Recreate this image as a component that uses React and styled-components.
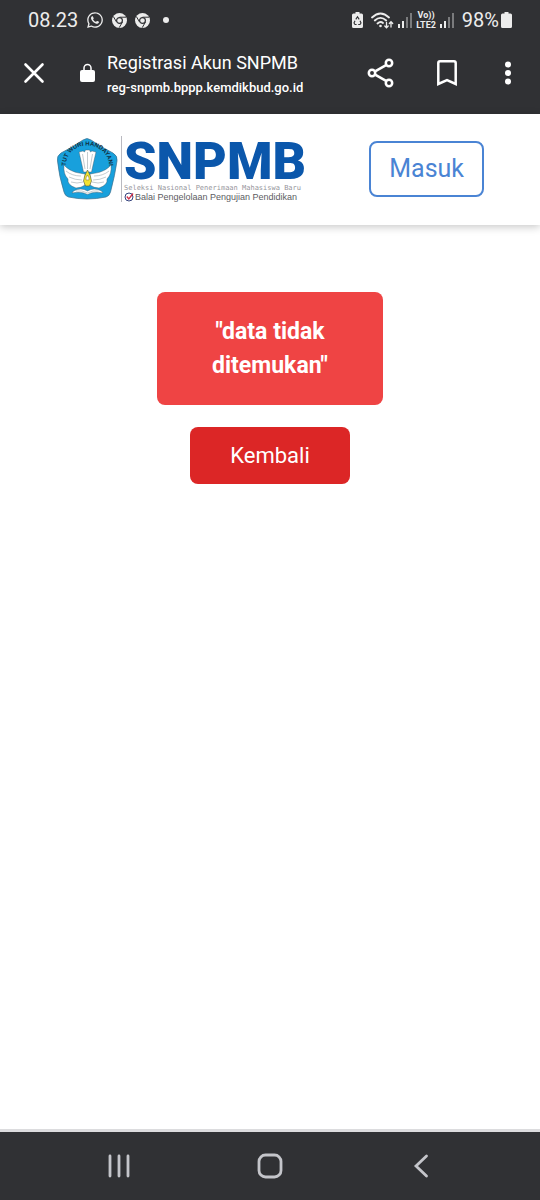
import React from 'react'
import styled, { createGlobalStyle } from 'styled-components'
import { FaWhatsapp } from 'react-icons/fa'

const GlobalStyle = createGlobalStyle`
  * {
    box-sizing: border-box;
  }

  body {
    margin: 0;
    background: #fff;
    font-family: Roboto, 'Noto Sans', sans-serif;
  }

  button {
    font-family: inherit;
    cursor: pointer;
  }
`

const Screen = styled.div`
  display: flex;
  flex-direction: column;
  min-height: 100vh;
`

const Chrome = styled.div`
  background: #303134;
  color: #fff;
`

const StatusBar = styled.div`
  display: flex;
  align-items: center;
  justify-content: space-between;
  height: 40px;
  padding: 0 28px;
  color: #ececec;
  font-size: 20px;
`

const StatusGroup = styled.div`
  display: flex;
  align-items: center;
  gap: ${props => props.$gap}px;

  svg {
    display: block;
    flex: none;
  }
`

const Dot = styled.span`
  width: 6px;
  height: 6px;
  margin-left: 5px;
  border-radius: 50%;
  background: #ececec;
`

const Volte = styled.span`
  display: flex;
  flex-direction: column;
  align-items: center;
  font-size: 9px;
  font-weight: 700;
  line-height: 10px;
`

const BatteryLevel = styled.span`
  display: flex;
  align-items: center;
  gap: 2px;
  margin-left: 4px;
`

const Toolbar = styled.div`
  display: flex;
  align-items: center;
  height: 74px;
  padding: 0 23px 8px 20px;
`

const IconButton = styled.button`
  display: flex;
  padding: 0;
  border: 0;
  background: none;
  color: inherit;
`

const Address = styled.div`
  display: flex;
  flex: 1;
  align-items: center;
  min-width: 0;
  margin-left: 30px;
  gap: 10px;
`

const AddressText = styled.div`
  padding-top: 4px;
`

const AddressTitle = styled.div`
  font-size: 18px;
  line-height: 26px;
`

const AddressHost = styled.div`
  font-size: 13px;
  font-weight: 500;
  line-height: 24px;
`

const Actions = styled.div`
  display: flex;
  align-items: center;
  gap: 38px;
`

const Header = styled.header`
  display: flex;
  align-items: center;
  justify-content: space-between;
  height: 111px;
  padding: 0 56px 2px;
  background: #fff;
  box-shadow: 0 2px 8px rgba(0, 0, 0, 0.22);
`

const Brand = styled.a`
  display: flex;
  align-items: center;
  gap: 3px;
  color: inherit;
  text-decoration: none;
`

const BrandText = styled.div`
  padding-left: 2px;
  border-left: 1px solid #b9b9c0;
  white-space: nowrap;
`

const BrandName = styled.div`
  padding-top: 4px;
  color: #0b57ab;
  font-size: 52px;
  font-weight: 900;
  line-height: 44px;
`

const BrandLine = styled.div`
  color: #96969c;
  font-family: 'DejaVu Sans Mono', monospace;
  font-size: 7px;
  line-height: 8px;
`

const BrandOffice = styled.div`
  display: flex;
  align-items: center;
  gap: 1px;
  color: #5c5c62;
  font-family: 'Liberation Sans', sans-serif;
  font-size: 9px;
  line-height: 10px;
`

const LoginButton = styled.button`
  height: 56px;
  padding: 0 18px;
  border: 2px solid #4a84d4;
  border-radius: 8px;
  background: #fff;
  color: #4a84d4;
  font-size: 25px;
`

const Main = styled.main`
  display: flex;
  flex: 1;
  flex-direction: column;
  align-items: center;
  gap: 22px;
  padding-top: 67px;
`

const Alert = styled.div`
  width: 42%;
  padding: 23px 45px 22px;
  border-radius: 8px;
  background: #ef4444;
  color: #fff;
  font-size: 23px;
  font-weight: 700;
  line-height: 34px;
  text-align: center;
`

const BackButton = styled.button`
  height: 57px;
  padding: 0 40px;
  border: 0;
  border-radius: 8px;
  background: #dc2626;
  color: #fff;
  font-size: 22px;
`

const NavBar = styled.nav`
  display: grid;
  grid-template-columns: repeat(3, 1fr);
  justify-items: center;
  align-items: center;
  height: 71px;
  padding: 0 8%;
  border-top: 3px solid #dcdcde;
  background: #303134;
  color: #c4c5ca;
`

const Signal = () => (
  <svg width="14" height="15" viewBox="0 0 14 15" fill="currentColor">
    <rect x="0" y="11" width="2" height="4" />
    <rect x="4" y="8" width="2" height="7" />
    <rect x="8" y="4" width="2" height="11" opacity="0.4" />
    <rect x="12" y="0" width="2" height="15" opacity="0.4" />
  </svg>
)

const ChromeIcon = () => (
  <svg width="15" height="15" viewBox="0 0 15 15">
    <circle cx="7.500" cy="7.500" r="7.500" fill="currentColor" />
    <path d="M7.500 4.200H14M4.600 9.100L1.400 3.600M10.400 9.100L7.200 14.700" stroke="#303134" strokeWidth="1" />
    <circle cx="7.500" cy="7.500" r="2.900" fill="currentColor" stroke="#303134" strokeWidth="1.200" />
  </svg>
)

const Battery = () => (
  <svg width="11" height="16" viewBox="0 0 11 16">
    <path d="M3.500 0h4v1.500H9.500Q11 1.500 11 3v11.500q0 1.500-1.500 1.500h-8Q0 16 0 14.500V3q0-1.500 1.500-1.500h2z" fill="currentColor" />
  </svg>
)

const RecycleBattery = () => (
  <svg width="15" height="16" viewBox="0 0 15 16">
    <path d="M3.500 0h4v1.500H9.500Q11 1.500 11 3v11.500q0 1.500-1.500 1.500h-8Q0 16 0 14.500V3q0-1.500 1.500-1.500h2z" fill="currentColor" />
    <path
      d="M3.800 7.400 5.500 4.800 7.200 7.400M8 8.800l1 2.200-1 1.500H6.200M4.600 12.500H3L2 11l1-2.200"
      fill="none"
      stroke="#303134"
      strokeWidth="1.100"
    />
  </svg>
)

const Wifi = () => (
  <svg width="23" height="17" viewBox="0 0 23 17" fill="none" stroke="currentColor" strokeLinecap="round">
    <path d="M1 5.500Q9.500-2.500 18 5.500M3.800 8.500Q9.500 3.200 15.200 8.500M6.500 11.500Q9.500 8.800 12 11" strokeWidth="1.800" />
    <circle cx="9.500" cy="14" r="1.300" fill="currentColor" stroke="none" />
    <path d="M15.500 10.500v5M13.800 14l1.700 1.800 1.700-1.800M20 15v-5M18.300 11.500 20 9.700 21.700 11.500" strokeWidth="1.300" />
  </svg>
)

const Crest = () => (
  <svg width="62" height="63" viewBox="7 7 62 63" role="img" aria-label="Tut Wuri Handayani">
    <defs>
      <path id="motto" d="M17 38C15 8 61 8 60 38" />
    </defs>
    <path
      d="M34 10Q38 7 42 10Q52 17 64 23Q69 26 68 31Q66 45 61.500 62Q60.500 66 57 67Q38 71 19.500 67Q16 66 15 62Q10 46 8.500 31Q7.500 26 12 23Q24 17 34 10Z"
      fill="#18a0dc"
      stroke="#3c6f8c"
      strokeWidth="0.700"
    />
    <text fill="#12303f" fontFamily="Liberation Sans, sans-serif" fontSize="6" fontWeight="700">
      <textPath href="#motto" startOffset="50%" textAnchor="middle">TUT WURI HANDAYANI</textPath>
    </text>
    <g fill="#fff" stroke="#41505a" strokeWidth="0.400">
      <path d="M36 44C31 43 22 43 15 35Q14 44 19 49Q18 55 27 58Q32 58 36 55Z" />
      <path d="M41 44C46 43 55 43 62 35Q63 44 58 49Q59 55 50 58Q45 58 41 55Z" />
      <path d="M30 22l4-1 1.500 1 1-2h4l1 2 1.500-1 4 1-3 13-1.500 7h-8L33 35Z" />
      <path d="M24.500 61Q32 57 38.500 61Q45 57 52.500 61L54 63Q45 61 38.500 64.500Q32 61 23 63Z" />
    </g>
    <path
      d="M33.500 24l2.500 15M38.500 22v17M43.500 24L41 39M17 41q6 5 15 5M20 47q6 3 13 3M22 52q6 2 12 0M60 41q-6 5-15 5M57 47q-6 3-13 3M55 52q-6 2-12 0M27 61q6-1 11.500 2 5.500-3 11-2"
      fill="none"
      stroke="#8b989f"
      strokeWidth="0.500"
    />
    <path d="M38.500 40Q35 46 34.500 51l2 5h4l2-5Q42 46 38.500 40Z" fill="#f3e330" stroke="#4d5540" strokeWidth="0.600" />
    <path d="M38.500 45q-2 3-1.500 5h3q.500-2-1.500-5" fill="#fff" stroke="#7b7130" strokeWidth="0.500" />
  </svg>
)

const OfficeMark = () => (
  <svg width="10" height="10" viewBox="0 0 10 10" fill="none">
    <circle cx="5" cy="5" r="4" stroke="#33427d" strokeWidth="1" />
    <path d="M2.800 4.500 4.800 7 9 1.500" stroke="#d02f49" strokeWidth="1.300" />
  </svg>
)

const CloseIcon = () => (
  <svg width="28" height="28" viewBox="0 0 28 28" stroke="currentColor" strokeWidth="2.600" strokeLinecap="round">
    <path d="M5.500 5.500l17 17M22.500 5.500l-17 17" />
  </svg>
)

const LockIcon = () => (
  <svg width="19" height="20" viewBox="0 0 19 20">
    <path d="M6 8V5a3.500 3.500 0 0 1 7 0V8" fill="none" stroke="currentColor" strokeWidth="1.500" />
    <rect x="2" y="7" width="15" height="12" rx="2" fill="currentColor" />
  </svg>
)

const ShareIcon = () => (
  <svg width="28" height="30" viewBox="0 0 28 30" fill="none" stroke="currentColor" strokeWidth="2.500">
    <path d="M8.500 13.200l11-6.400M8.500 16.800l11 6.400" />
    <circle cx="5" cy="15" r="3.200" />
    <circle cx="22" cy="5" r="3.200" />
    <circle cx="22" cy="25" r="3.200" />
  </svg>
)

const BookmarkIcon = () => (
  <svg width="28" height="30" viewBox="0 0 28 30" fill="none" stroke="currentColor" strokeWidth="2.500">
    <path d="M5.300 26V5q0-1.700 1.700-1.700h14q1.700 0 1.700 1.700v21L14 22.200Z" />
  </svg>
)

const MoreIcon = () => (
  <svg width="18" height="30" viewBox="0 0 18 30" fill="currentColor">
    <circle cx="9" cy="6.500" r="3" />
    <circle cx="9" cy="15" r="3" />
    <circle cx="9" cy="23.500" r="3" />
  </svg>
)

const RecentsIcon = () => (
  <svg width="28" height="28" viewBox="0 0 28 28" stroke="currentColor" strokeWidth="2.800" strokeLinecap="round">
    <path d="M5 4v20M14 4v20M23 4v20" />
  </svg>
)

const HomeIcon = () => (
  <svg width="28" height="28" viewBox="0 0 28 28" fill="none" stroke="currentColor" strokeWidth="2.800">
    <rect x="3" y="3" width="22" height="22" rx="6.500" />
  </svg>
)

const BackIcon = () => (
  <svg width="28" height="28" viewBox="0 0 28 28" fill="none" stroke="currentColor" strokeWidth="2.800" strokeLinecap="round">
    <path d="M19.500 4L9 14l10.500 10" />
  </svg>
)

const actions = [
  { label: 'Bagikan', icon: ShareIcon },
  { label: 'Simpan', icon: BookmarkIcon },
  { label: 'Menu', icon: MoreIcon }
]

const navItems = [
  { label: 'Terbaru', icon: RecentsIcon },
  { label: 'Beranda', icon: HomeIcon },
  { label: 'Mundur', icon: BackIcon }
]

const App = () => (
  <Screen>
    <GlobalStyle />

    <Chrome>
      <StatusBar>
        <StatusGroup $gap={8}>
          <span>08.23</span>
          <FaWhatsapp size={18} />
          <ChromeIcon />
          <ChromeIcon />
          <Dot />
        </StatusGroup>
        <StatusGroup $gap={4}>
          <RecycleBattery />
          <Wifi />
          <Signal />
          <Volte>
            <span>Vo))</span>
            <span>LTE2</span>
          </Volte>
          <Signal />
          <BatteryLevel>
            98%
            <Battery />
          </BatteryLevel>
        </StatusGroup>
      </StatusBar>

      <Toolbar>
        <IconButton type="button" aria-label="Tutup">
          <CloseIcon />
        </IconButton>
        <Address>
          <LockIcon />
          <AddressText>
            <AddressTitle>Registrasi Akun SNPMB</AddressTitle>
            <AddressHost>reg-snpmb.bppp.kemdikbud.go.id</AddressHost>
          </AddressText>
        </Address>
        <Actions>
          {actions.map(({ label, icon: Icon }) => (
            <IconButton type="button" aria-label={label} key={label}>
              <Icon />
            </IconButton>
          ))}
        </Actions>
      </Toolbar>
    </Chrome>

    <Header>
      <Brand href="#">
        <Crest />
        <BrandText>
          <BrandName>SNPMB</BrandName>
          <BrandLine>Seleksi Nasional Penerimaan Mahasiswa Baru</BrandLine>
          <BrandOffice>
            <OfficeMark />
            Balai Pengelolaan Pengujian Pendidikan
          </BrandOffice>
        </BrandText>
      </Brand>
      <LoginButton type="button">Masuk</LoginButton>
    </Header>

    <Main>
      <Alert role="alert">"data tidak ditemukan"</Alert>
      <BackButton type="button">Kembali</BackButton>
    </Main>

    <NavBar>
      {navItems.map(({ label, icon: Icon }) => (
        <IconButton type="button" aria-label={label} key={label}>
          <Icon />
        </IconButton>
      ))}
    </NavBar>
  </Screen>
)

export default App
